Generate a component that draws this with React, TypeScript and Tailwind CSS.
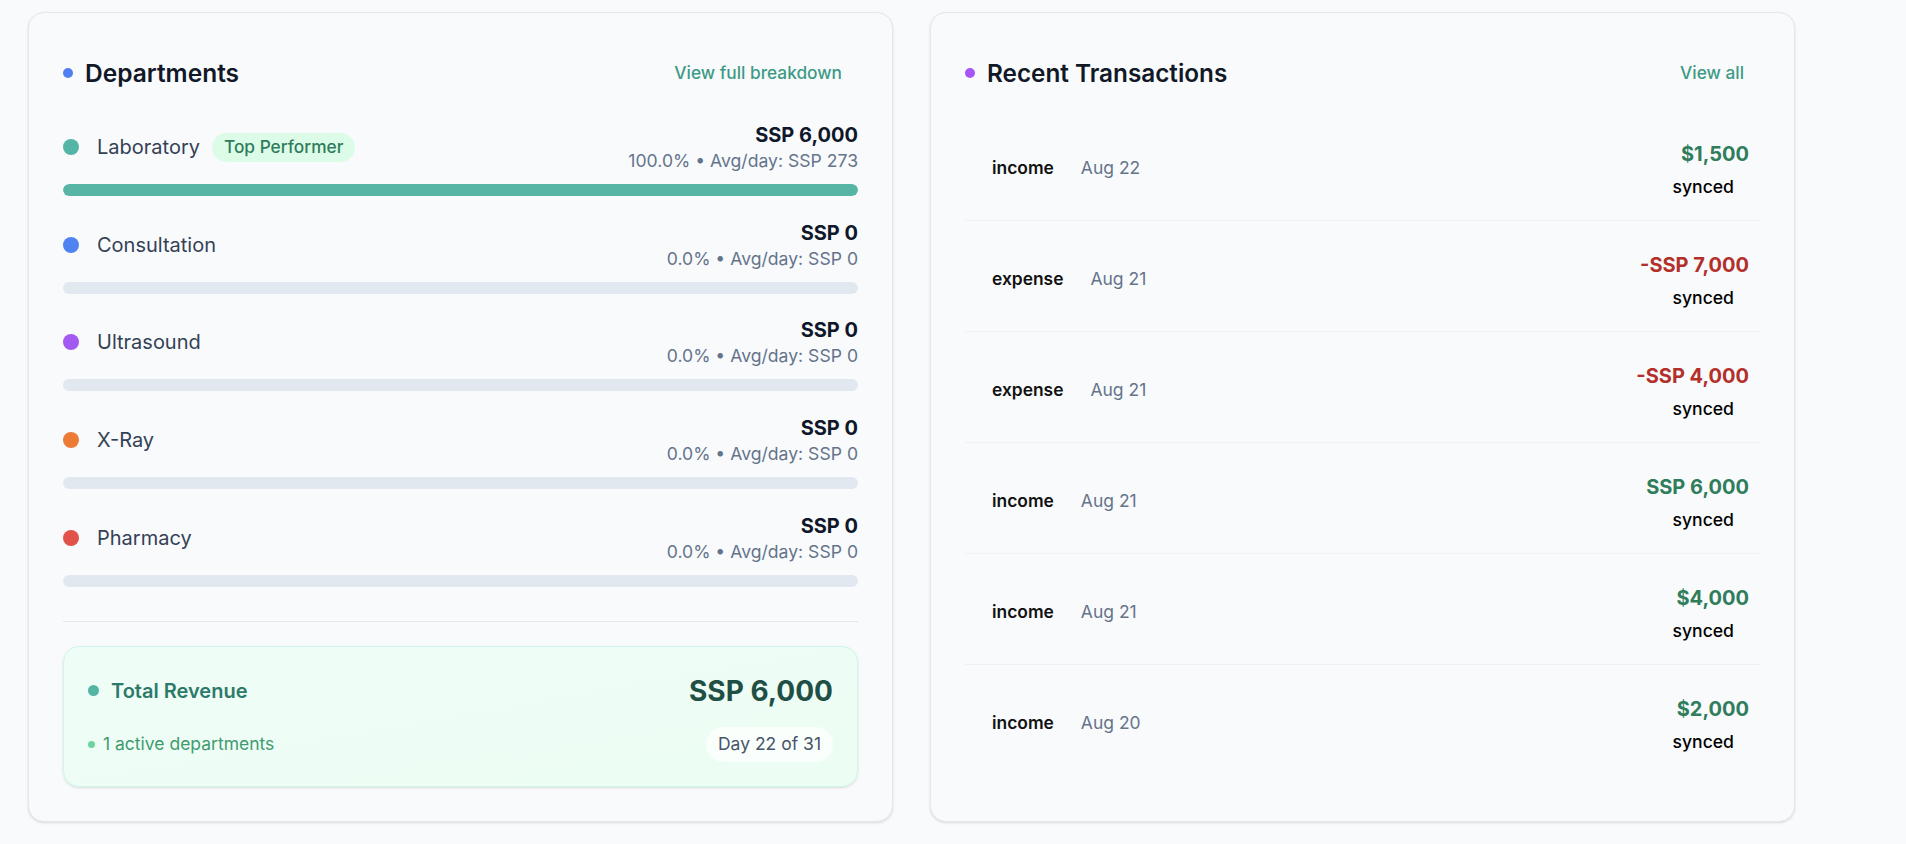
import React from "react";

type Dept = { name: string; color: string; amount: string; sub: string; pct: number; top?: boolean };

const depts: Dept[] = [
  { name: "Laboratory", color: "bg-[#55b5a5]", amount: "SSP 6,000", sub: "100.0% • Avg/day: SSP 273", pct: 100, top: true },
  { name: "Consultation", color: "bg-[#4f84f0]", amount: "SSP 0", sub: "0.0% • Avg/day: SSP 0", pct: 0 },
  { name: "Ultrasound", color: "bg-[#a25af0]", amount: "SSP 0", sub: "0.0% • Avg/day: SSP 0", pct: 0 },
  { name: "X-Ray", color: "bg-[#ec7b35]", amount: "SSP 0", sub: "0.0% • Avg/day: SSP 0", pct: 0 },
  { name: "Pharmacy", color: "bg-[#e0524a]", amount: "SSP 0", sub: "0.0% • Avg/day: SSP 0", pct: 0 },
];

type Tx = { type: string; date: string; amount: string; expense?: boolean };

const txs: Tx[] = [
  { type: "income", date: "Aug 22", amount: "$1,500" },
  { type: "expense", date: "Aug 21", amount: "-SSP 7,000", expense: true },
  { type: "expense", date: "Aug 21", amount: "-SSP 4,000", expense: true },
  { type: "income", date: "Aug 21", amount: "SSP 6,000" },
  { type: "income", date: "Aug 21", amount: "$4,000" },
  { type: "income", date: "Aug 20", amount: "$2,000" },
];

function Departments() {
  return (
    <div className="w-[865px] rounded-2xl border border-[#e2e8f0] bg-[#f9fafc] px-[34px] pt-10 pb-[34px] shadow-sm">
      <div className="flex h-10 items-center justify-between">
        <div className="flex items-center gap-3">
          <span className="h-2.5 w-2.5 rounded-full bg-[#4f7ff0]" />
          <h2 className="text-[24.5px] font-semibold leading-8 text-[#111827]">Departments</h2>
        </div>
        <button className="px-4 py-2 text-[17.3px] font-medium leading-6 text-[#3d9a86]">View full breakdown</button>
      </div>

      <div className="mt-7 flex flex-col gap-[22.7px]">
        {depts.map((d) => (
          <div key={d.name}>
            <div className="flex items-center justify-between">
              <div className="flex items-center">
                <span className={`h-4 w-4 rounded-full ${d.color}`} />
                <span className="ml-[18px] text-[20px] leading-7 text-[#334155]">{d.name}</span>
                {d.top && (
                  <span className="ml-3 flex h-[29px] items-center rounded-full bg-[#dcfce7] px-3 text-[17.3px] font-medium text-[#2f7d5d]">
                    Top Performer
                  </span>
                )}
              </div>
              <div className="text-right">
                <div className="text-[20px] font-bold leading-7 text-[#0f172a]">{d.amount}</div>
                <div className="text-[17.6px] leading-6 text-[#64748b]">{d.sub}</div>
              </div>
            </div>
            <div className="mt-[11px] h-3 w-full overflow-hidden rounded-full bg-[#e2e8f0]">
              <div className="h-full rounded-full bg-[#56b5a5]" style={{ width: `${d.pct}%` }} />
            </div>
          </div>
        ))}
      </div>

      <div className="mt-[34px] h-px bg-[#e2e8f0]" />

      <div className="mt-6 rounded-2xl border border-[#cdf7e8] bg-gradient-to-br from-[#effdf7] to-[#ecfdf3] p-6 shadow-sm">
        <div className="flex h-10 items-center justify-between">
          <div className="flex items-center gap-3">
            <span className="h-[11px] w-[11px] rounded-full bg-[#55b5a5]" />
            <span className="text-[20px] font-semibold leading-7 text-[#2d7a6a]">Total Revenue</span>
          </div>
          <span className="text-[28px] font-bold leading-9 text-[#1f4f45]">SSP 6,000</span>
        </div>
        <div className="mt-4 flex items-center justify-between">
          <div className="flex items-center gap-2">
            <span className="h-[7px] w-[7px] rounded-full bg-[#6dd3a0]" />
            <span className="text-[17.5px] leading-6 text-[#3f9b6f]">1 active departments</span>
          </div>
          <span className="flex h-[35px] items-center rounded-full bg-white/70 px-3 text-[17.5px] leading-6 text-[#475569]">
            Day 22 of 31
          </span>
        </div>
      </div>
    </div>
  );
}

function Transactions() {
  return (
    <div className="flex w-[865px] flex-col rounded-2xl border border-[#e2e8f0] bg-[#f9fafc] px-[34px] pt-10 pb-[34px] shadow-sm">
      <div className="flex h-10 items-center justify-between">
        <div className="flex items-center gap-3">
          <span className="h-2.5 w-2.5 rounded-full bg-[#a855f7]" />
          <h2 className="text-[24.3px] font-semibold leading-8 text-[#111827]">Recent Transactions</h2>
        </div>
        <button className="px-4 py-2 text-[17.3px] font-medium leading-6 text-[#3d9a86]">View all</button>
      </div>

      <div className="mt-[17px] flex flex-col">
        {txs.map((t, i) => (
          <div
            key={i}
            className={`flex items-center justify-between pt-[30px] pb-[21px] pl-[27px] pr-[11px] ${
              i < txs.length - 1 ? "border-b border-[#eef2f6]" : ""
            }`}
          >
            <div className="mb-[3px] flex items-center gap-[27px]">
              <span className="text-[17.4px] font-semibold leading-6 text-[#111111]">{t.type}</span>
              <span className="text-[17.5px] leading-6 text-[#64748b]">{t.date}</span>
            </div>
            <div className="flex flex-col items-end">
              <span className={`text-[20px] font-bold leading-7 ${t.expense ? "text-[#b3302a]" : "text-[#2f7d5b]"}`}>
                {t.amount}
              </span>
              <span className="mt-[7px] mr-[15px] text-[17.6px] font-medium leading-6 text-black">synced</span>
            </div>
          </div>
        ))}
      </div>
    </div>
  );
}

export default function App() {
  return (
    <div className="min-h-screen bg-[#f8fafc] font-['Inter',sans-serif]">
      <div className="flex items-stretch gap-[37px] pl-[28px] pt-[12px]">
        <Departments />
        <Transactions />
      </div>
    </div>
  );
}
